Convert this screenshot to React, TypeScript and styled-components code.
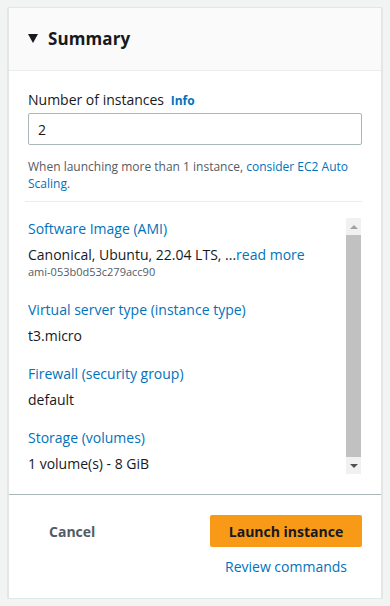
import React from 'react';
import styled, { createGlobalStyle } from 'styled-components';

const GlobalStyle = createGlobalStyle`
    html, body {
        margin: 0;
        padding: 0;
        background: #f2f3f3;
        font-family: "Open Sans", "Noto Sans", Arial, sans-serif;
        color: #16191f;
    }
    * { box-sizing: border-box; }
`;

interface SummaryItem {
    label: string;
    value: string;
    more?: string;
    sub?: string;
}

const items: SummaryItem[] = [
    { label: 'Software Image (AMI)', value: 'Canonical, Ubuntu, 22.04 LTS, ...', more: 'read more', sub: 'ami-053b0d53c279acc90' },
    { label: 'Virtual server type (instance type)', value: 't3.micro' },
    { label: 'Firewall (security group)', value: 'default' },
    { label: 'Storage (volumes)', value: '1 volume(s) - 8 GiB' },
];

export default function App() {
    return (
        <>
            <GlobalStyle />
            <Card>
                <Header>
                    <Caret />
                    <h2>Summary</h2>
                </Header>
                <Body>
                    <FieldLabel>
                        Number of instances <InfoLink>Info</InfoLink>
                    </FieldLabel>
                    <Input defaultValue="2" />
                    <Hint>
                        When launching more than 1 instance, <Link>consider EC2 Auto Scaling</Link>.
                    </Hint>
                    <Divider />
                    <ScrollArea>
                        <List>
                            {items.map(item => (
                                <Item key={item.label}>
                                    <ItemLabel>{item.label}</ItemLabel>
                                    <ItemValue>
                                        {item.value}
                                        {item.more && <Link>{item.more}</Link>}
                                    </ItemValue>
                                    {item.sub && <ItemSub>{item.sub}</ItemSub>}
                                </Item>
                            ))}
                        </List>
                        <Scrollbar>
                            <ArrowBox><Arrow $up /></ArrowBox>
                            <Thumb />
                            <ArrowBox><Arrow /></ArrowBox>
                        </Scrollbar>
                    </ScrollArea>
                </Body>
                <Footer>
                    <CancelButton>Cancel</CancelButton>
                    <Actions>
                        <PrimaryButton>Launch instance</PrimaryButton>
                        <Link>Review commands</Link>
                    </Actions>
                </Footer>
            </Card>
        </>
    );
}

const Card = styled.div`
    margin: 7px 8px 0;
    width: 374px;
    background: #fff;
    border: 1px solid #e3e6e6;
    box-shadow: 0 1px 1px 0 rgba(0, 28, 36, 0.3);
`;

const Header = styled.div`
    display: flex;
    align-items: center;
    gap: 10px;
    height: 63px;
    padding: 0 19px 2px;
    background: #fafafa;
    border-bottom: 1px solid #eaeded;

    h2 {
        margin: 0;
        font-size: 17px;
        font-weight: 700;
        letter-spacing: 0.1px;
    }
`;

const Caret = styled.span`
    width: 0;
    height: 0;
    border-left: 5.5px solid transparent;
    border-right: 5.5px solid transparent;
    border-top: 9px solid #16191f;
    margin-top: 1px;
`;

const Body = styled.div`
    padding: 19px 19px 20px;
    border-bottom: 1px solid #aab7b8;
`;

const FieldLabel = styled.div`
    font-size: 14px;
    line-height: 20px;
`;

const InfoLink = styled.span`
    margin-left: 3px;
    font-size: 12px;
    font-weight: 700;
    color: #0073bb;
`;

const Input = styled.input`
    display: block;
    width: 100%;
    height: 32px;
    margin-top: 2px;
    padding: 0 9px;
    border: 1px solid #aab7b8;
    border-radius: 2px;
    font-family: inherit;
    font-size: 14px;
    color: #16191f;
    outline: none;
`;

const Hint = styled.div`
    margin-top: 13px;
    font-size: 12px;
    line-height: 17px;
    color: #545b64;
`;

const Link = styled.span`
    color: #0073bb;
    cursor: pointer;
`;

const Divider = styled.hr`
    margin: 9px 0 16px -3px;
    border: 0;
    border-top: 1px solid #eaeded;
`;

const ScrollArea = styled.div`
    display: flex;
    height: 256px;
    overflow: hidden;
`;

const List = styled.div`
    flex: 1;
    display: flex;
    flex-direction: column;
    gap: 18px;
    padding-top: 1px;
`;

const Item = styled.div`
    display: flex;
    flex-direction: column;
`;

const ItemLabel = styled.div`
    font-size: 14px;
    line-height: 20px;
    color: #0073bb;
`;

const ItemValue = styled.div`
    margin-top: 6px;
    font-size: 14px;
    line-height: 20px;
    color: #16191f;
`;

const ItemSub = styled.div`
    margin-bottom: 3px;
    font-size: 11px;
    line-height: 14px;
    color: #545b64;
`;

const Scrollbar = styled.div`
    display: flex;
    flex-direction: column;
    width: 15px;
    margin-right: 1px;
    background: #f1f1f1;
`;

const ArrowBox = styled.div`
    display: flex;
    align-items: center;
    justify-content: center;
    height: 17px;
`;

const Arrow = styled.span<{ $up?: boolean }>`
    width: 0;
    height: 0;
    border-left: 4px solid transparent;
    border-right: 4px solid transparent;
    ${p => p.$up
        ? 'border-bottom: 4px solid #a3a3a3;'
        : 'border-top: 4px solid #505050;'}
`;

const Thumb = styled.div`
    flex: 1;
    background: #c1c1c1;
`;

const Footer = styled.div`
    display: flex;
    justify-content: space-between;
    align-items: flex-start;
    padding: 20px 19px 21px;
`;

const CancelButton = styled.button`
    height: 32px;
    padding: 0 21px;
    background: none;
    border: 0;
    font-family: inherit;
    font-size: 14px;
    font-weight: 700;
    color: #545b64;
`;

const Actions = styled.div`
    display: flex;
    flex-direction: column;
    align-items: center;
    gap: 10px;
    width: 152px;
    font-size: 14px;
    line-height: 20px;
`;

const PrimaryButton = styled.button`
    width: 100%;
    height: 32px;
    background: #f89a17;
    border: 0;
    border-radius: 2px;
    font-family: inherit;
    font-size: 14px;
    font-weight: 700;
    color: #16191f;
`;
